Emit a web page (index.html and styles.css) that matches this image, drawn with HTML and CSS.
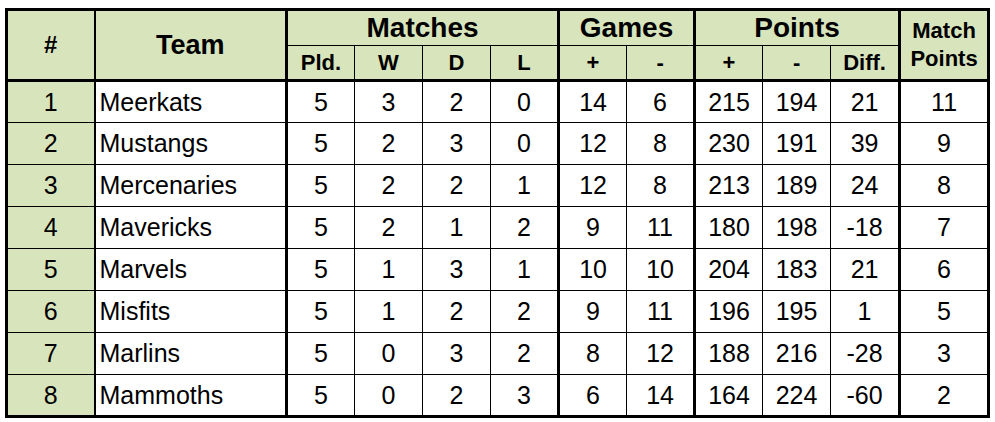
FILE: index.html
```html
<!DOCTYPE html>
<html>
<head>
<meta charset="utf-8">
<link rel="stylesheet" href="styles.css">
</head>
<body>
<table class="standings">
  <colgroup>
    <col class="c-rank">
    <col class="c-team">
    <col class="c-num"><col class="c-num"><col class="c-num"><col class="c-num">
    <col class="c-num"><col class="c-num">
    <col class="c-num"><col class="c-num"><col class="c-diff">
    <col class="c-mp">
  </colgroup>
  <thead>
    <tr class="h1">
      <th rowspan="2" class="rank-h">#</th>
      <th rowspan="2" class="team-h">Team</th>
      <th colspan="4" class="group thick-r">Matches</th>
      <th colspan="2" class="group thick-r">Games</th>
      <th colspan="3" class="group thick-r">Points</th>
      <th rowspan="2" class="mp-h">Match<br>Points</th>
    </tr>
    <tr class="h2">
      <th>Pld.</th><th>W</th><th>D</th><th class="thick-r">L</th>
      <th>+</th><th class="thick-r">-</th>
      <th>+</th><th>-</th><th class="thick-r">Diff.</th>
    </tr>
  </thead>
  <tbody>
    <tr><td class="rank">1</td><td class="team">Meerkats</td><td>5</td><td>3</td><td>2</td><td class="thick-r">0</td><td>14</td><td class="thick-r">6</td><td>215</td><td>194</td><td class="thick-r">21</td><td>11</td></tr>
    <tr><td class="rank">2</td><td class="team">Mustangs</td><td>5</td><td>2</td><td>3</td><td class="thick-r">0</td><td>12</td><td class="thick-r">8</td><td>230</td><td>191</td><td class="thick-r">39</td><td>9</td></tr>
    <tr><td class="rank">3</td><td class="team">Mercenaries</td><td>5</td><td>2</td><td>2</td><td class="thick-r">1</td><td>12</td><td class="thick-r">8</td><td>213</td><td>189</td><td class="thick-r">24</td><td>8</td></tr>
    <tr><td class="rank">4</td><td class="team">Mavericks</td><td>5</td><td>2</td><td>1</td><td class="thick-r">2</td><td>9</td><td class="thick-r">11</td><td>180</td><td>198</td><td class="thick-r">-18</td><td>7</td></tr>
    <tr><td class="rank">5</td><td class="team">Marvels</td><td>5</td><td>1</td><td>3</td><td class="thick-r">1</td><td>10</td><td class="thick-r">10</td><td>204</td><td>183</td><td class="thick-r">21</td><td>6</td></tr>
    <tr><td class="rank">6</td><td class="team">Misfits</td><td>5</td><td>1</td><td>2</td><td class="thick-r">2</td><td>9</td><td class="thick-r">11</td><td>196</td><td>195</td><td class="thick-r">1</td><td>5</td></tr>
    <tr><td class="rank">7</td><td class="team">Marlins</td><td>5</td><td>0</td><td>3</td><td class="thick-r">2</td><td>8</td><td class="thick-r">12</td><td>188</td><td>216</td><td class="thick-r">-28</td><td>3</td></tr>
    <tr><td class="rank">8</td><td class="team">Mammoths</td><td>5</td><td>0</td><td>2</td><td class="thick-r">3</td><td>6</td><td class="thick-r">14</td><td>164</td><td>224</td><td class="thick-r">-60</td><td>2</td></tr>
  </tbody>
</table>
</body>
</html>
```

FILE: styles.css
```css
html, body {
  margin: 0;
  padding: 0;
  background: #ffffff;
}

body {
  padding: 8px 0 0 5px;
  font-family: "Liberation Sans", Arial, sans-serif;
  color: #000;
}

.standings {
  border-collapse: collapse;
  table-layout: fixed;
  width: 983px;
  border: 3px solid #000;
}

.c-rank { width: 88px; }
.c-team { width: 192px; }
.c-num { width: 68px; }
.c-diff { width: 69px; }
.c-mp { width: 89px; }

.standings th,
.standings td {
  border: 1px solid #000;
  padding: 0;
  text-align: center;
  vertical-align: middle;
  overflow: hidden;
  white-space: nowrap;
}

.standings th {
  background: #d8e4bc;
  font-weight: bold;
}

.standings thead tr.h1 { height: 36px; }
.standings thead tr.h2 { height: 35px; }
.standings tbody tr { height: 42px; }

.standings thead tr.h2 th {
  font-size: 22px;
  border-bottom: 3px solid #000;
}

.rank-h, .team-h, .mp-h {
  border-bottom: 3px solid #000 !important;
}

.rank-h { font-size: 24px; }
.team-h { font-size: 27px; }
.group { font-size: 28px; }
.mp-h { font-size: 22px; line-height: 28px; }

.thick-r { border-right: 3px solid #000 !important; }
.rank-h, .rank { border-right: 2px solid #000 !important; }
.team-h, .team { border-right: 3px solid #000 !important; }

.standings td {
  font-size: 25px;
}

.standings td.rank {
  background: #d8e4bc;
}

.standings td.team {
  text-align: left;
  padding-left: 4px;
}
```
